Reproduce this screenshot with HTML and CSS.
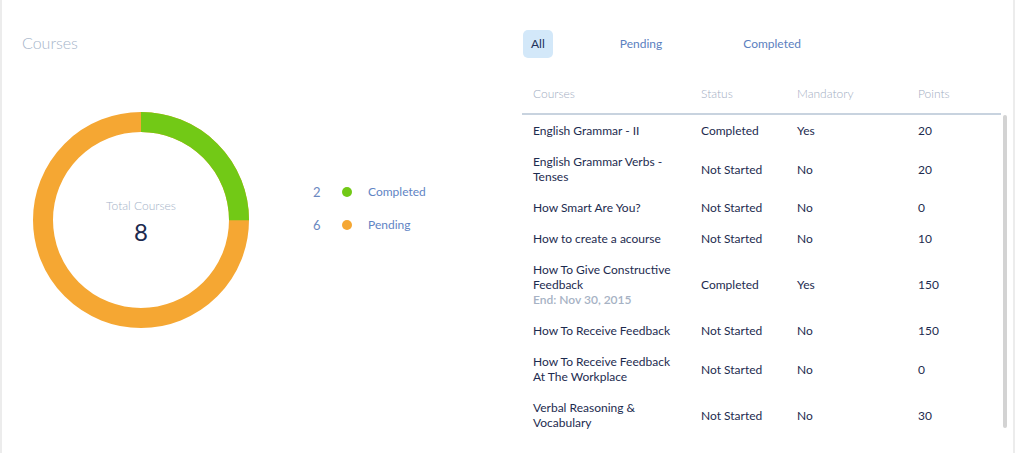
FILE: index.html
```html
<!DOCTYPE html>
<html lang="en">
<head>
<meta charset="utf-8">
<title>Courses</title>
<link rel="stylesheet" href="styles.css">
</head>
<body>
<div class="card">
  <section class="summary">
    <h2 class="title">Courses</h2>
    <div class="chart-row">
      <div class="donut">
        <svg width="216" height="216" viewBox="0 0 216 216">
          <circle cx="108" cy="108" r="98" fill="none" stroke="#f5a733" stroke-width="20"/>
          <circle cx="108" cy="108" r="98" fill="none" stroke="#72c916" stroke-width="20" stroke-dasharray="153.94 615.75" transform="rotate(-90 108 108)"/>
        </svg>
        <div class="donut-center">
          <div class="donut-label">Total Courses</div>
          <div class="donut-value">8</div>
        </div>
      </div>
      <div class="legend">
        <span class="legend-num">2</span><span class="dot dot-green"></span><span class="legend-label">Completed</span>
        <span class="legend-num">6</span><span class="dot dot-orange"></span><span class="legend-label">Pending</span>
      </div>
    </div>
  </section>
  <section class="list">
    <nav class="tabs">
      <span class="tab tab-active">All</span>
      <span class="tab tab-pending">Pending</span>
      <span class="tab tab-completed">Completed</span>
    </nav>
    <div class="row head">
      <span>Courses</span><span>Status</span><span>Mandatory</span><span>Points</span>
    </div>
    <div class="body">
      <div class="rows">
        <div class="row"><span>English Grammar - II</span><span>Completed</span><span>Yes</span><span>20</span></div>
        <div class="row"><span>English Grammar Verbs - Tenses</span><span>Not Started</span><span>No</span><span>20</span></div>
        <div class="row"><span>How Smart Are You?</span><span>Not Started</span><span>No</span><span>0</span></div>
        <div class="row"><span>How to create a acourse</span><span>Not Started</span><span>No</span><span>10</span></div>
        <div class="row"><span>How To Give Constructive Feedback<span class="end">End: Nov 30, 2015</span></span><span>Completed</span><span>Yes</span><span>150</span></div>
        <div class="row"><span>How To Receive Feedback</span><span>Not Started</span><span>No</span><span>150</span></div>
        <div class="row"><span>How To Receive Feedback At The Workplace</span><span>Not Started</span><span>No</span><span>0</span></div>
        <div class="row"><span>Verbal Reasoning &amp; Vocabulary</span><span>Not Started</span><span>No</span><span>30</span></div>
      </div>
      <div class="scrollbar"><div class="thumb"></div></div>
    </div>
  </section>
</div>
</body>
</html>
```

FILE: styles.css
```css
* { box-sizing: border-box; }
html, body { margin: 0; padding: 0; background: #fff; }
body {
  font-family: Lato, "Open Sans", "Liberation Sans", sans-serif;
  color: #1d2b4f;
  width: 1015px;
  height: 453px;
  overflow: hidden;
}
.card {
  display: flex;
  width: 1015px;
  height: 453px;
  border-left: 2px solid #ececec;
  border-right: 2px solid #ececec;
}
.summary {
  flex: 0 0 520px;
  padding: 34px 0 0 20px;
}
.title {
  margin: 0;
  font-size: 16px;
  line-height: 18px;
  font-weight: 300;
  color: #a6b5ca;
}
.chart-row {
  display: flex;
  align-items: flex-start;
  margin: 60px 0 0 11px;
}
.donut {
  position: relative;
  width: 216px;
  height: 216px;
}
.donut svg { display: block; }
.donut-center {
  position: absolute;
  inset: 0;
  display: flex;
  flex-direction: column;
  align-items: center;
  justify-content: center;
  padding-top: 4px;
}
.donut-label {
  font-size: 12px;
  line-height: 14px;
  font-weight: 300;
  color: #a5b3c8;
}
.donut-value {
  margin-top: 5px;
  font-size: 24px;
  line-height: 28px;
  color: #1b2a4e;
}
.legend {
  display: grid;
  grid-template-columns: 29px 26px auto;
  row-gap: 17px;
  align-items: center;
  margin: 72px 0 0 64px;
  font-size: 12px;
  line-height: 16px;
}
.legend-num { color: #6a88c0; font-size: 13px; }
.legend-label { color: #5f84c4; }
.dot {
  width: 10px;
  height: 10px;
  border-radius: 50%;
}
.dot-green { background: #72c916; }
.dot-orange { background: #f5a733; }

.list {
  flex: 1;
  padding: 30px 6px 0 0;
  display: flex;
  flex-direction: column;
}
.tabs {
  display: flex;
  align-items: center;
  height: 28px;
  font-size: 12px;
}
.tab {
  line-height: 28px;
  color: #5b80c0;
}
.tab-active {
  margin-left: 1px;
  padding: 0 8px;
  border-radius: 5px;
  background: #d3e8f9;
  color: #22325a;
}
.tab-pending { margin-left: 67px; }
.tab-completed { margin-left: 81px; }

.row {
  display: grid;
  grid-template-columns: 168px 96px 121px 1fr;
  align-items: center;
  width: 479px;
  font-size: 12px;
  line-height: 15px;
  padding: 8px 0;
}
.row > span { padding-left: 11px; }
.row > span:first-child { padding-right: 18px; }
.head {
  margin-top: 20px;
  padding: 8px 0 12px;
  border-bottom: 2px solid #c8d3df;
  color: #9fadc2;
  font-weight: 300;
}
.body {
  display: flex;
  align-items: flex-start;
  gap: 2px;
  height: 320px;
  overflow: hidden;
}
.rows { width: 479px; }
.end {
  display: block;
  color: #a6b2c4;
  font-weight: 600;
}
.scrollbar {
  width: 4px;
  height: 313px;
}
.thumb {
  height: 100%;
  border-radius: 2px;
  background: #d3d3d3;
}
```
